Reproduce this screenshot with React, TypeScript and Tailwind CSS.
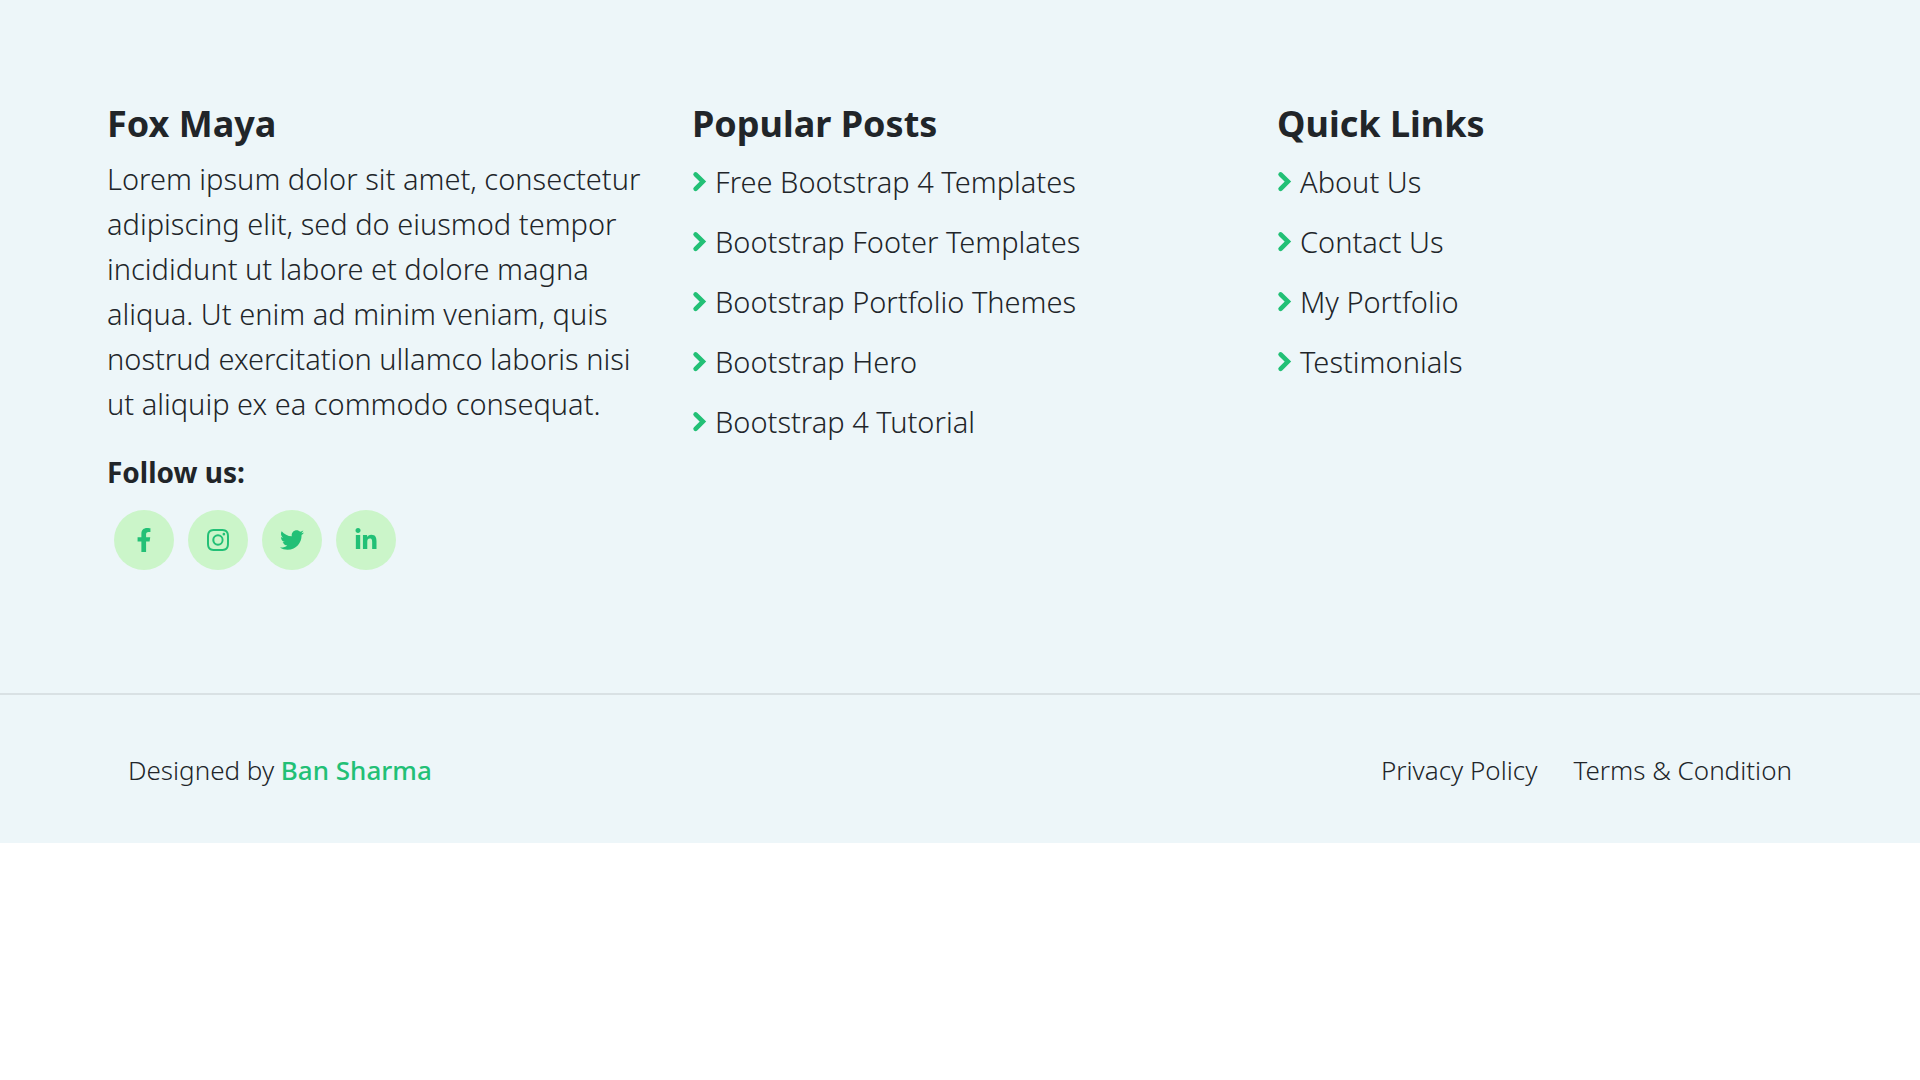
import { FaFacebookF, FaTwitter, FaLinkedinIn } from "react-icons/fa";
import { BsInstagram } from "react-icons/bs";

const posts = [
  "Free Bootstrap 4 Templates",
  "Bootstrap Footer Templates",
  "Bootstrap Portfolio Themes",
  "Bootstrap Hero",
  "Bootstrap 4 Tutorial",
];
const links = ["About Us", "Contact Us", "My Portfolio", "Testimonials"];
const socials = [
  { label: "Facebook", Icon: FaFacebookF, size: "size-6" },
  { label: "Instagram", Icon: BsInstagram, size: "size-[22px]" },
  { label: "Twitter", Icon: FaTwitter, size: "size-6" },
  { label: "LinkedIn", Icon: FaLinkedinIn, size: "size-6" },
];

function Chevron() {
  return (
    <svg viewBox="0 0 15 24" className="h-6 w-[15px] shrink-0 text-[#22c076]" aria-hidden="true">
      <path
        d="M3.6 4.4 10.9 11.6 3.6 18.8"
        fill="none"
        stroke="currentColor"
        strokeWidth="4.6"
        strokeLinecap="round"
        strokeLinejoin="miter"
      />
    </svg>
  );
}

function LinkColumn({ title, items }: { title: string; items: string[] }) {
  return (
    <nav aria-label={title}>
      <h2 className="text-4xl leading-12 font-bold">{title}</h2>
      <ul className="mt-[11px]">
        {items.map((item) => (
          <li key={item} className="mb-[15px] flex h-[45px] items-center gap-2">
            <Chevron />
            <a href="#">{item}</a>
          </li>
        ))}
      </ul>
    </nav>
  );
}

export default function App() {
  return (
    <footer className="bg-[#edf6f9] font-['Noto_Sans','Open_Sans',sans-serif] text-[29px] leading-[45px] font-[350] text-[#212529]">
      <div className="grid grid-cols-3 pt-[100px] pr-[58px] pb-[123px] pl-[107px]">
        <section className="pr-10">
          <h2 className="text-4xl leading-12 font-bold">Fox Maya</h2>
          <p className="mt-2">
            Lorem ipsum dolor sit amet, consectetur adipiscing elit, sed do eiusmod tempor incididunt ut labore et
            dolore magna aliqua. Ut enim ad minim veniam, quis nostrud exercitation ullamco laboris nisi ut aliquip ex
            ea commodo consequat.
          </p>
          <h3 className="mt-6 text-[28px] font-bold">Follow us:</h3>
          <div className="mt-[15px] flex gap-3.5 px-[7px]">
            {socials.map(({ label, Icon, size }) => (
              <a
                key={label}
                href="#"
                aria-label={label}
                className="flex size-15 items-center justify-center rounded-full bg-[#cbf5c9] text-[#22c076]"
              >
                <Icon className={size} />
              </a>
            ))}
          </div>
        </section>
        <LinkColumn title="Popular Posts" items={posts} />
        <LinkColumn title="Quick Links" items={links} />
      </div>
      <div className="flex justify-between border-t-2 border-[#d9e1e4] px-32 pt-[53px] pb-[50px] text-[26px]">
        <p>
          Designed by <a href="#" className="font-medium text-[#22c076]">Ban Sharma</a>
        </p>
        <div className="flex gap-9">
          <a href="#">Privacy Policy</a>
          <a href="#">Terms &amp; Condition</a>
        </div>
      </div>
    </footer>
  );
}
